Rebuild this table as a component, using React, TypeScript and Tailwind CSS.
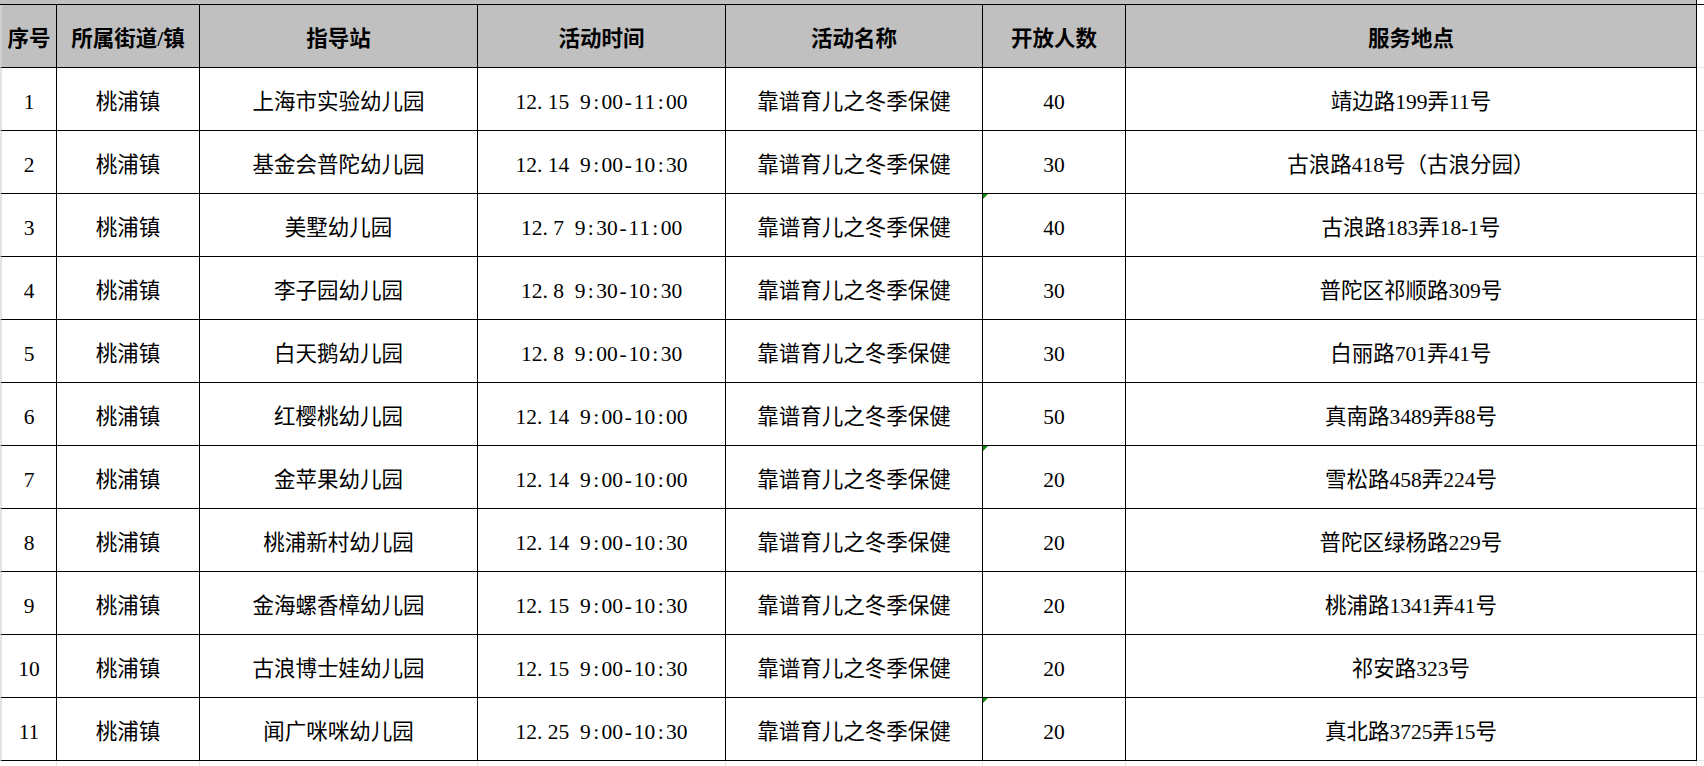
import React from 'react';

const rows = [
  ['1', '桃浦镇', '上海市实验幼儿园', '12.15 9:00-11:00', '靠谱育儿之冬季保健', '40', '靖边路199弄11号', false],
  ['2', '桃浦镇', '基金会普陀幼儿园', '12.14 9:00-10:30', '靠谱育儿之冬季保健', '30', '古浪路418号（古浪分园）', false],
  ['3', '桃浦镇', '美墅幼儿园', '12.7 9:30-11:00', '靠谱育儿之冬季保健', '40', '古浪路183弄18-1号', true],
  ['4', '桃浦镇', '李子园幼儿园', '12.8 9:30-10:30', '靠谱育儿之冬季保健', '30', '普陀区祁顺路309号', false],
  ['5', '桃浦镇', '白天鹅幼儿园', '12.8 9:00-10:30', '靠谱育儿之冬季保健', '30', '白丽路701弄41号', false],
  ['6', '桃浦镇', '红樱桃幼儿园', '12.14 9:00-10:00', '靠谱育儿之冬季保健', '50', '真南路3489弄88号', false],
  ['7', '桃浦镇', '金苹果幼儿园', '12.14 9:00-10:00', '靠谱育儿之冬季保健', '20', '雪松路458弄224号', true],
  ['8', '桃浦镇', '桃浦新村幼儿园', '12.14 9:00-10:30', '靠谱育儿之冬季保健', '20', '普陀区绿杨路229号', false],
  ['9', '桃浦镇', '金海螺香樟幼儿园', '12.15 9:00-10:30', '靠谱育儿之冬季保健', '20', '桃浦路1341弄41号', false],
  ['10', '桃浦镇', '古浪博士娃幼儿园', '12.15 9:00-10:30', '靠谱育儿之冬季保健', '20', '祁安路323号', false],
  ['11', '桃浦镇', '闻广咪咪幼儿园', '12.25 9:00-10:30', '靠谱育儿之冬季保健', '20', '真北路3725弄15号', true],
] as const;

const headers = ['序号', '所属街道/镇', '指导站', '活动时间', '活动名称', '开放人数', '服务地点'];

const cols = 'grid grid-cols-[57px_143px_278px_248px_257px_143px_571px_1fr]';

// half-width monospace digits, like the sheet's song-style font
function Mono({ text }: { text: string }) {
  return (
    <span className="inline-flex">
      {text.split('').map((c, i) => (
        <span key={i} className={c === '.' ? 'inline-block w-[0.5em] text-left' : 'inline-block w-[0.5em] text-center'}>
          {c === ' ' ? '\u00a0' : c}
        </span>
      ))}
    </span>
  );
}

function Cell({ children, first, flag }: { children: React.ReactNode; first?: boolean; flag?: boolean }) {
  return (
    <div
      className={`relative h-[63px] pt-[8px] flex items-center justify-center border-r border-b border-black whitespace-nowrap ${
        first ? 'border-l-2 border-l-[#e3e3e3]' : ''
      }`}
    >
      {flag && (
        <span className="absolute left-0 top-0 w-0 h-0 border-t-[5px] border-t-[#0a8a0a] border-r-[5px] border-r-transparent" />
      )}
      {children}
    </div>
  );
}

export default function App() {
  return (
    <div
      className="w-[1704px] h-[766px] overflow-hidden bg-white text-black text-[21.5px] leading-none"
      style={{ fontFamily: '"Liberation Serif", "Noto Sans CJK SC", serif' }}
    >
      {/* strip of the title row above */}
      <div className={cols}>
        {headers.map((h, i) => (
          <div key={h} className={i === 6 ? 'h-[4px] bg-[#c0c0c0] border-r border-black' : 'h-[4px] bg-[#c0c0c0]'} />
        ))}
        <div />
      </div>

      {/* header */}
      <div className={`${cols} border-t border-black`}>
        {headers.map((h, i) => (
          <div
            key={h}
            className={`h-[63px] pt-[8px] flex items-center justify-center bg-[#c0c0c0] border-r border-b border-black font-bold whitespace-nowrap ${
              i === 0 ? 'border-l-2 border-l-[#d0d0d0]' : ''
            }`}
          >
            {h}
          </div>
        ))}
        <div className="h-[63px] border-b border-[#e3e3e3] bg-white" />
      </div>

      {rows.map((r) => (
        <div key={r[0]} className={cols}>
          <Cell first>{r[0]}</Cell>
          <Cell>{r[1]}</Cell>
          <Cell>{r[2]}</Cell>
          <Cell>
            <Mono text={r[3]} />
          </Cell>
          <Cell>{r[4]}</Cell>
          <Cell flag={r[7]}>{r[5]}</Cell>
          <Cell>{r[6]}</Cell>
          <div className="h-[63px] border-b border-[#e3e3e3]" />
        </div>
      ))}

      {/* empty sheet below */}
      <div className={cols}>
        {headers.map((h) => (
          <div key={h} className="h-[10px] border-r border-[#e3e3e3]" />
        ))}
        <div />
      </div>
    </div>
  );
}
